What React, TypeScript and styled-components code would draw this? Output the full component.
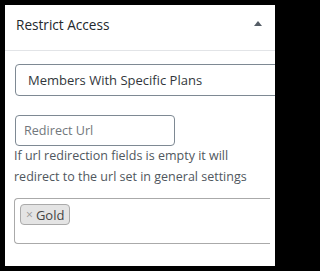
import React from "react";
import styled, { createGlobalStyle } from "styled-components";

const Global = createGlobalStyle`
  html, body { margin: 0; padding: 0; background: #000; }
  body { font-family: "Open Sans", "Noto Sans", sans-serif; }
  * { box-sizing: border-box; }
`;

const Panel = styled.div`
  margin: 5px;
  width: 270px;
  height: 261px;
  background: #fff;
  overflow: hidden;
`;

const Header = styled.div`
  height: 46px;
  border-bottom: 1px solid #e2e4e7;
  display: flex;
  align-items: flex-start;
  justify-content: space-between;
  padding: 10px 13px 0 11px;
`;

const Title = styled.h2`
  margin: 0;
  font-size: 13.6px;
  font-weight: 400;
  color: #23282d;
  line-height: 20px;
`;

const Toggle = styled.span`
  margin-top: 6px;
  width: 0;
  height: 0;
  border-left: 4px solid transparent;
  border-right: 4px solid transparent;
  border-bottom: 5px solid #555d66;
`;

const Body = styled.div`
  padding: 13px 0 0 10px;
  display: flex;
  flex-direction: column;
  align-items: flex-start;
`;

const SelectBox = styled.div`
  width: 280px;
  height: 32px;
  border: 1px solid #7e8993;
  border-radius: 4px;
  display: flex;
  align-items: center;
  padding-left: 12px;
  font-size: 13px;
  color: #32373c;
`;

const UrlInput = styled.input`
  margin-top: 19px;
  width: 160px;
  height: 31px;
  border: 1px solid #7e8993;
  border-radius: 4px;
  padding: 0 8px;
  font-family: "Open Sans", "Noto Sans", sans-serif;
  font-size: 12.6px;
  color: #32373c;
  outline: none;
  &::placeholder { color: #72777c; }
`;

const Help = styled.p`
  margin: -1px 0 0 -1px;
  font-size: 12.5px;
  line-height: 21px;
  color: #50575e;
`;

const MultiBox = styled.div`
  margin: 11px 0 0 -1px;
  width: 256px;
  height: 46px;
  border: 1px solid #aaa;
  border-right: none;
  border-radius: 4px 0 0 4px;
  padding: 5px 5px;
  display: flex;
  align-items: flex-start;
`;

const Tag = styled.span`
  display: inline-flex;
  align-items: center;
  height: 21px;
  padding: 0 5px;
  background: #e4e4e4;
  border: 1px solid #aaa;
  border-radius: 4px;
  font-size: 13px;
  color: #444;
  gap: 3px;
`;

const Remove = styled.span`
  color: #999;
  font-size: 12px;
  font-weight: 400;
`;

export default function App() {
  return (
    <>
      <Global />
      <Panel>
        <Header>
          <Title>Restrict Access</Title>
          <Toggle />
        </Header>
        <Body>
          <SelectBox>Members With Specific Plans</SelectBox>
          <UrlInput placeholder="Redirect Url" />
          <Help>
            If url redirection fields is empty it will
            <br />
            redirect to the url set in general settings
          </Help>
          <MultiBox>
            <Tag>
              <Remove>×</Remove>Gold
            </Tag>
          </MultiBox>
        </Body>
      </Panel>
    </>
  );
}
